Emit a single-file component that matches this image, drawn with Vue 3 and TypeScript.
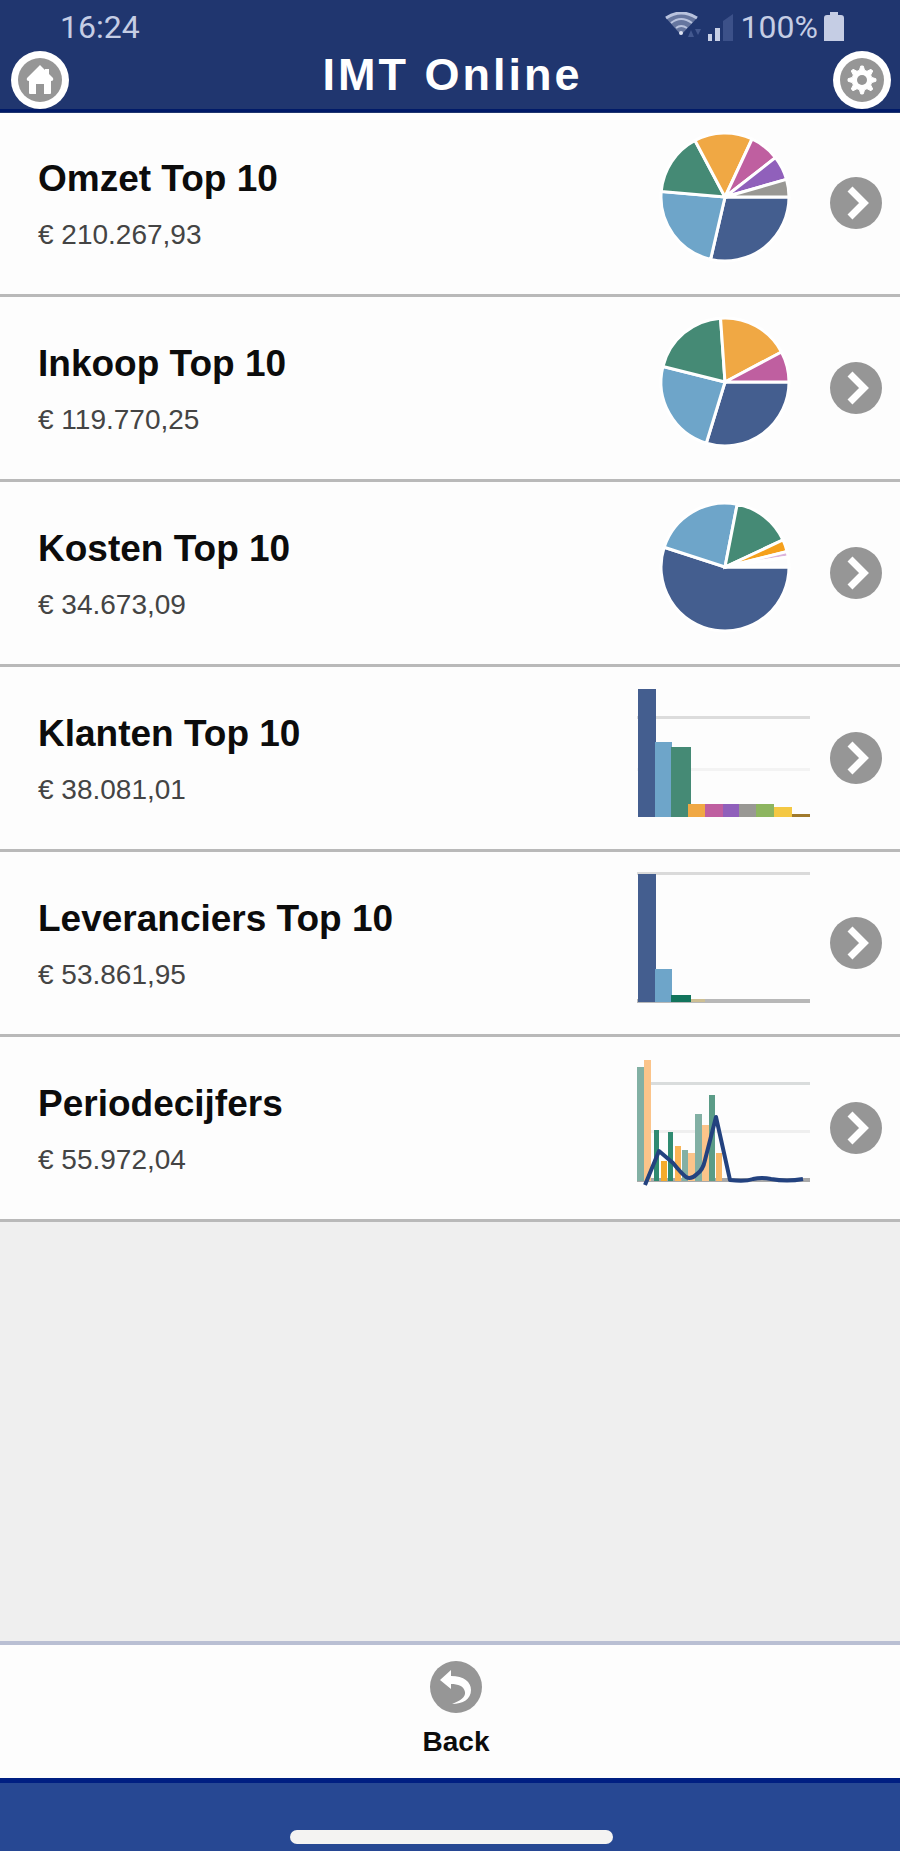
<script setup lang="ts">
interface Slice {
  to: number
  color: string
}
interface Bar {
  x: number
  w: number
  y: number
  color: string
}
interface Rule {
  y: number
  color: string
}
interface Row {
  id: string
  title: string
  amount: string
  slices?: Slice[]
  bars?: Bar[]
  rules?: Rule[]
  base?: number
  baseline?: string
  line?: string
}

const navy = '#445e8f'
const sky = '#6ea5c9'
const green = '#458a75'
const orange = '#f0a844'
const magenta = '#bf5fa0'
const purple = '#9060bb'
const grey = '#999894'
const paleGreen = '#82b0a4'
const paleOrange = '#fbc48a'

const rows: Row[] = [
  {
    id: 'omzet',
    title: 'Omzet Top 10',
    amount: '€ 210.267,93',
    slices: [
      { to: 103, color: navy },
      { to: 185, color: sky },
      { to: 242, color: green },
      { to: 295, color: orange },
      { to: 322, color: magenta },
      { to: 344, color: purple },
      { to: 360, color: grey },
    ],
  },
  {
    id: 'inkoop',
    title: 'Inkoop Top 10',
    amount: '€ 119.770,25',
    slices: [
      { to: 107, color: navy },
      { to: 194, color: sky },
      { to: 266, color: green },
      { to: 332, color: orange },
      { to: 360, color: magenta },
    ],
  },
  {
    id: 'kosten',
    title: 'Kosten Top 10',
    amount: '€ 34.673,09',
    slices: [
      { to: 198, color: navy },
      { to: 281, color: sky },
      { to: 335, color: green },
      { to: 346, color: '#f5a01c' },
      { to: 351, color: '#dcb4dc' },
      { to: 360, color: '#fdfdfd' },
    ],
  },
  {
    id: 'klanten',
    title: 'Klanten Top 10',
    amount: '€ 38.081,01',
    base: 130,
    rules: [
      { y: 30, color: '#dcdcdc' },
      { y: 82, color: '#f3f3f3' },
    ],
    bars: [
      { x: 1, w: 18, y: 2, color: navy },
      { x: 18, w: 17, y: 55, color: sky },
      { x: 34, w: 20, y: 60, color: green },
      { x: 51, w: 18, y: 117, color: orange },
      { x: 68, w: 18, y: 117, color: magenta },
      { x: 86, w: 17, y: 117, color: purple },
      { x: 102, w: 17, y: 117, color: grey },
      { x: 119, w: 18, y: 117, color: '#8db560' },
      { x: 137, w: 18, y: 120, color: '#f4c843' },
      { x: 155, w: 18, y: 127, color: '#a07a2c' },
    ],
  },
  {
    id: 'leveranciers',
    title: 'Leveranciers Top 10',
    amount: '€ 53.861,95',
    base: 130,
    baseline: '#b8b8b8',
    rules: [{ y: 1, color: '#dadada' }],
    bars: [
      { x: 1, w: 18, y: 2, color: navy },
      { x: 18, w: 17, y: 97, color: sky },
      { x: 34, w: 20, y: 123, color: '#12745c' },
      { x: 54, w: 14, y: 127, color: '#cdbf94' },
    ],
  },
  {
    id: 'periodecijfers',
    title: 'Periodecijfers',
    amount: '€ 55.972,04',
    base: 124,
    baseline: '#a9a9a9',
    rules: [
      { y: 26, color: '#d9dcdc' },
      { y: 74, color: '#efefef' },
    ],
    bars: [
      { x: 0, w: 7, y: 10, color: paleGreen },
      { x: 7, w: 7, y: 3, color: paleOrange },
      { x: 17, w: 5, y: 73, color: '#2f8b71' },
      { x: 24, w: 6, y: 104, color: '#f5ab2c' },
      { x: 31, w: 5, y: 75, color: '#2f8b71' },
      { x: 38, w: 6, y: 89, color: '#f9b456' },
      { x: 45, w: 6, y: 93, color: paleGreen },
      { x: 51, w: 7, y: 96, color: paleOrange },
      { x: 58, w: 7, y: 57, color: paleGreen },
      { x: 65, w: 7, y: 68, color: paleOrange },
      { x: 72, w: 6, y: 38, color: '#5b9c87' },
      { x: 79, w: 6, y: 96, color: '#fab867' },
    ],
    line: 'M8 128L22 94L36 106Q44 116 49 120Q54 123 60 117Q66 113 68 103L79 60L93 123Q108 125 116 122Q125 120 134 122Q150 125 166 122',
  },
]

const cx = 88
const cy = 65
const radius = 64

function point(angle: number, r: number): string {
  const a = (angle * Math.PI) / 180
  return `${(Math.cos(a) * r).toFixed(2)} ${(Math.sin(a) * r).toFixed(2)}`
}

function wedge(slices: Slice[], i: number): string {
  const from = i === 0 ? 0 : slices[i - 1].to
  const large = slices[i].to - from > 180 ? 1 : 0
  return `M0 0L${point(from, radius)}A${radius} ${radius} 0 ${large} 1 ${point(slices[i].to, radius)}Z`
}

const gear: string = (() => {
  const pts: string[] = []
  for (let i = 0; i < 8; i++) {
    const a = i * 45 - 90
    pts.push(point(a - 15, 10), point(a - 5, 14), point(a + 5, 14), point(a + 15, 10))
  }
  return `M${pts.join('L')}Z`
})()
</script>

<template>
  <div class="app">
    <header class="top">
      <div class="status">
        <span>16:24</span>
        <div class="status-right">
          <svg class="signal" viewBox="0 0 70 30" aria-hidden="true">
            <path d="M1 6Q16-4 32 6L16 23Z" fill="#66769f" />
            <g fill="none" stroke="#b9c3de" stroke-width="2">
              <path d="M1 6Q16-4 32 6" stroke-width="3" />
              <path d="M6 11Q16 3 27 11" />
              <path d="M11 16Q16 12 22 16" />
            </g>
            <circle cx="16" cy="21" r="2" fill="#dde3f2" />
            <path d="M23 25l3-7 3 7zM30 17l3 6 3-6z" fill="#43588f" />
            <path d="M43 22h4v7h-4zM50 16h5v13h-5z" fill="#c8d0e6" />
            <path d="M58 9l10-7v27h-10z" fill="#3c5189" />
          </svg>
          <span>100%</span>
          <svg class="battery" viewBox="0 0 20 30" aria-hidden="true">
            <path d="M6 0h8v3h3q3 0 3 3v23H0V6q0-3 3-3h3z" fill="#c5cde4" />
          </svg>
        </div>
      </div>
      <div class="nav">
        <button class="round" type="button" aria-label="Home">
          <svg viewBox="0 0 60 60" aria-hidden="true">
            <circle cx="30" cy="30" r="29" fill="#fff" />
            <circle cx="30" cy="30" r="22" fill="#969696" />
            <path d="M30 15L17 28q-1 3 2 3v12q0 1 1 1h6V34h8v10h6q1 0 1-1V31q3 0 2-3l-4-4v-5h-4v1z" fill="#fff" />
          </svg>
        </button>
        <h1>IMT Online</h1>
        <button class="round" type="button" aria-label="Settings">
          <svg viewBox="0 0 60 60" aria-hidden="true">
            <circle cx="30" cy="30" r="29" fill="#fff" />
            <circle cx="30" cy="30" r="22" fill="#969696" />
            <g transform="translate(30 30)">
              <path :d="gear" fill="#fff" stroke="#fff" stroke-linejoin="round" />
              <circle r="5" fill="#969696" />
            </g>
          </svg>
        </button>
      </div>
    </header>

    <main>
      <ul class="list">
        <li v-for="row in rows" :key="row.id">
          <a class="row" :href="'#' + row.id">
            <span class="text">
              <span class="title">{{ row.title }}</span>
              <span class="amount">{{ row.amount }}</span>
            </span>
            <svg class="chart" viewBox="0 0 176 132" aria-hidden="true">
              <g v-if="row.slices" :transform="`translate(${cx} ${cy})`" stroke="#fff" stroke-width="3">
                <path v-for="(s, i) in row.slices" :key="i" :d="wedge(row.slices, i)" :fill="s.color" />
              </g>
              <template v-if="row.bars">
                <rect v-for="r in row.rules" :key="r.y" x="0" :y="r.y - 1" width="173" height="3" :fill="r.color" />
                <rect v-if="row.baseline" x="0" :y="(row.base ?? 0) - 3" width="173" height="4" :fill="row.baseline" />
                <rect
                  v-for="b in row.bars"
                  :key="b.x"
                  :x="b.x"
                  :y="b.y"
                  :width="b.w"
                  :height="(row.base ?? 0) - b.y"
                  :fill="b.color"
                />
                <path v-if="row.line" :d="row.line" fill="none" stroke="#23427f" stroke-width="4" stroke-linejoin="round" />
              </template>
            </svg>
            <svg class="icon" viewBox="0 0 52 52" aria-hidden="true">
              <circle cx="26" cy="26" r="26" fill="#969696" />
              <path d="M20 12L34 26L20 40" fill="none" stroke="#fff" stroke-width="7" />
            </svg>
          </a>
        </li>
      </ul>
    </main>

    <footer class="toolbar">
      <button class="back" type="button">
        <svg class="icon" viewBox="0 0 52 52" aria-hidden="true">
          <circle cx="26" cy="26" r="26" fill="#969696" />
          <path d="M10 19L21 9V15C34 15 41 21 41 29C41 38 33 43 22 43C30 40 36 36 35 31C34 25 28 23 21 23V28Z" fill="#fff" />
        </svg>
        <span>Back</span>
      </button>
    </footer>
    <div class="system"><div class="pill"></div></div>
  </div>
</template>

<style>
body {
  margin: 0;
}
</style>

<style scoped>
.app {
  display: flex;
  flex-direction: column;
  min-height: 100vh;
  background: #efefef;
  color: #0c0c0c;
  font-family: "Liberation Sans", Arial, sans-serif;
}
.top {
  position: relative;
  background: #20366f;
  border-bottom: 3px solid #001a68;
  box-shadow: 0 1px 0 #20366f;
}
.status {
  display: flex;
  justify-content: space-between;
  align-items: center;
  height: 46px;
  padding: 4px 56px 0 60px;
  color: #c5cde4;
  font: 32px/46px Roboto, sans-serif;
}
.status-right {
  display: flex;
  align-items: center;
  gap: 6px;
}
.signal {
  width: 70px;
  height: 30px;
}
.battery {
  width: 20px;
  height: 30px;
}
.nav {
  display: grid;
  grid-template-columns: 60px 1fr 60px;
  padding: 0 8px 0 10px;
  height: 59px;
}
h1 {
  margin: 0;
  padding-left: 3px;
  color: #fff;
  text-align: center;
  font-size: 45px;
  line-height: 50px;
  letter-spacing: 3px;
}
button {
  border: 0;
  padding: 0;
  background: none;
  color: inherit;
  font-family: inherit;
}
.round,
.round svg {
  display: block;
  width: 60px;
  height: 60px;
}
main {
  flex: 1;
}
.list {
  list-style: none;
  margin: 0;
  padding: 0;
}
.row {
  display: flex;
  align-items: center;
  gap: 17px;
  height: 182px;
  padding: 0 18px 0 38px;
  border-bottom: 3px solid #b9b9b9;
  background: #fdfdfd;
  color: inherit;
  text-decoration: none;
}
.text {
  flex: 1;
  display: flex;
  flex-direction: column;
  gap: 16px;
  padding-top: 4px;
}
.title {
  font-size: 37px;
  font-weight: 700;
  line-height: 44px;
}
.amount {
  color: #444;
  font-size: 28px;
  line-height: 36px;
}
.chart {
  width: 176px;
  height: 132px;
  margin-bottom: 10px;
}
.icon {
  width: 52px;
  height: 52px;
}
.toolbar {
  display: flex;
  justify-content: center;
  padding: 16px 0 20px 12px;
  border-top: 4px solid #b9bfd3;
  background: #fdfdfd;
}
.back {
  display: flex;
  flex-direction: column;
  align-items: center;
  gap: 13px;
  font-size: 28px;
  font-weight: 700;
  line-height: 32px;
}
.system {
  display: flex;
  justify-content: center;
  padding: 47px 0 7px 3px;
  border-top: 5px solid #001f82;
  background: #274893;
}
.pill {
  width: 36%;
  height: 14px;
  border-radius: 7px;
  background: #f4f3f2;
}
</style>
